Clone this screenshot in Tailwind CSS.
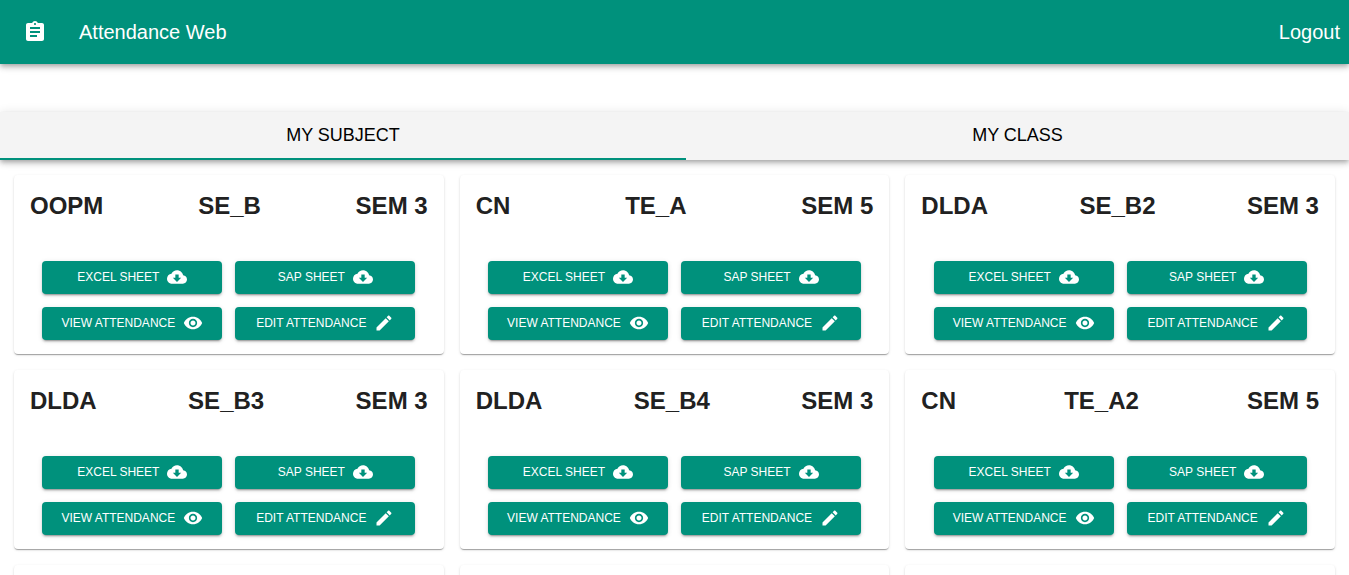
<!DOCTYPE html>
<html lang="en">
<head>
<meta charset="utf-8">
<meta name="viewport" content="width=device-width, initial-scale=1">
<title>Attendance Web</title>
<script src="https://cdn.jsdelivr.net/npm/@tailwindcss/browser@4"></script>
</head>
<body class="h-screen overflow-hidden bg-white font-['Liberation_Sans',Arial,sans-serif] text-[#212121]">

<svg class="hidden" aria-hidden="true">
  <symbol id="cloud" viewBox="0 0 24 24"><path d="M19.35 10.04C18.67 6.59 15.64 4 12 4 9.11 4 6.6 5.64 5.35 8.04 2.34 8.36 0 10.91 0 14c0 3.31 2.69 6 6 6h13c2.76 0 5-2.24 5-5 0-2.64-2.05-4.78-4.65-4.96zM17 13l-5 5-5-5h3V9h4v4h3z"/></symbol>
  <symbol id="eye" viewBox="0 0 24 24"><path d="M12 4.5C7 4.5 2.73 7.61 1 12c1.730 4.390 6 7.500 11 7.500s9.270-3.110 11-7.500c-1.730-4.390-6-7.500-11-7.500zM12 17c-2.760 0-5-2.240-5-5s2.240-5 5-5 5 2.240 5 5-2.240 5-5 5zm0-8c-1.660 0-3 1.340-3 3s1.340 3 3 3 3-1.340 3-3-1.340-3-3-3z"/></symbol>
  <symbol id="pencil" viewBox="0 0 24 24"><path d="M3 17.250V21h3.750L17.810 9.940l-3.750-3.750L3 17.250zM20.710 7.040c.39-.39.39-1.020 0-1.410l-2.340-2.340c-.39-.39-1.020-.39-1.410 0l-1.830 1.830 3.750 3.750 1.830-1.830z"/></symbol>
</svg>

<header class="flex h-16 items-center bg-[#00917c] pr-[9px] pl-[23px] text-xl text-white shadow-[0_2px_4px_-1px_rgba(0,0,0,0.2),0_4px_5px_0_rgba(0,0,0,0.14),0_1px_10px_0_rgba(0,0,0,0.12)]">
  <button type="button" aria-label="Menu" class="mr-8">
    <svg class="size-6 fill-current" viewBox="0 0 24 24"><path d="M19 3h-4.180C14.400 1.840 13.300 1 12 1c-1.300 0-2.400.84-2.820 2H5c-1.100 0-2 .9-2 2v14c0 1.100.9 2 2 2h14c1.100 0 2-.9 2-2V5c0-1.100-.9-2-2-2zm-7 0c.55 0 1 .45 1 1s-.45 1-1 1-1-.45-1-1 .45-1 1-1zm2 14H7v-2h7v2zm3-4H7v-2h10v2zm0-4H7V7h10v2z"/></svg>
  </button>
  <h1 class="grow">Attendance Web</h1>
  <a href="#logout">Logout</a>
</header>

<div role="tablist" class="mt-12 flex h-12 bg-[#f4f4f4] text-lg text-black shadow-[0_2px_4px_-1px_rgba(0,0,0,0.2),0_4px_5px_0_rgba(0,0,0,0.14),0_1px_10px_0_rgba(0,0,0,0.12)]">
  <button type="button" role="tab" aria-selected="true" class="flex-auto border-b-2 border-[#00917c] px-3">MY SUBJECT</button>
  <button type="button" role="tab" aria-selected="false" class="flex-auto border-b-2 border-transparent px-3">MY CLASS</button>
</div>

<main id="cards" class="grid grid-cols-3 gap-4 px-[14px] pt-[15px]"></main>

<template id="card">
  <article class="min-h-[179px] rounded bg-white px-4 pt-[15px] pb-[14px] shadow-[0_2px_1px_-1px_rgba(0,0,0,0.2),0_1px_1px_0_rgba(0,0,0,0.14),0_1px_3px_0_rgba(0,0,0,0.12)]">
    <h2 class="flex justify-between text-2xl font-bold"><span></span><span></span><span></span></h2>
    <div class="mt-[39px] flex flex-wrap justify-center gap-[13px]">
      <button type="button" class="flex h-[33px] w-[180px] items-center justify-center gap-2 rounded bg-[#00917c] pb-px text-xs text-white shadow-[0_3px_1px_-2px_rgba(0,0,0,0.2),0_2px_2px_0_rgba(0,0,0,0.14),0_1px_5px_0_rgba(0,0,0,0.12)]">EXCEL SHEET<svg class="size-5 fill-current"><use href="#cloud"/></svg></button>
      <button type="button" class="flex h-[33px] w-[180px] items-center justify-center gap-2 rounded bg-[#00917c] pb-px text-xs text-white shadow-[0_3px_1px_-2px_rgba(0,0,0,0.2),0_2px_2px_0_rgba(0,0,0,0.14),0_1px_5px_0_rgba(0,0,0,0.12)]">SAP SHEET<svg class="size-5 fill-current"><use href="#cloud"/></svg></button>
      <button type="button" class="flex h-[33px] w-[180px] items-center justify-center gap-2 rounded bg-[#00917c] pb-px text-xs text-white shadow-[0_3px_1px_-2px_rgba(0,0,0,0.2),0_2px_2px_0_rgba(0,0,0,0.14),0_1px_5px_0_rgba(0,0,0,0.12)]">VIEW ATTENDANCE<svg class="size-5 fill-current"><use href="#eye"/></svg></button>
      <button type="button" class="flex h-[33px] w-[180px] items-center justify-center gap-2 rounded bg-[#00917c] pb-px text-xs text-white shadow-[0_3px_1px_-2px_rgba(0,0,0,0.2),0_2px_2px_0_rgba(0,0,0,0.14),0_1px_5px_0_rgba(0,0,0,0.12)]">EDIT ATTENDANCE<svg class="size-5 fill-current"><use href="#pencil"/></svg></button>
    </div>
  </article>
</template>

<script>
  const subjects = [
    ["OOPM", "SE_B", "SEM 3"], ["CN", "TE_A", "SEM 5"], ["DLDA", "SE_B2", "SEM 3"],
    ["DLDA", "SE_B3", "SEM 3"], ["DLDA", "SE_B4", "SEM 3"], ["CN", "TE_A2", "SEM 5"],
    null, null, null
  ];
  const list = document.getElementById("cards");
  for (const subject of subjects) {
    const card = document.getElementById("card").content.cloneNode(true);
    if (subject) card.querySelectorAll("h2 span").forEach((s, i) => { s.textContent = subject[i]; });
    else card.querySelector("article").replaceChildren();
    list.append(card);
  }
</script>
</body>
</html>
